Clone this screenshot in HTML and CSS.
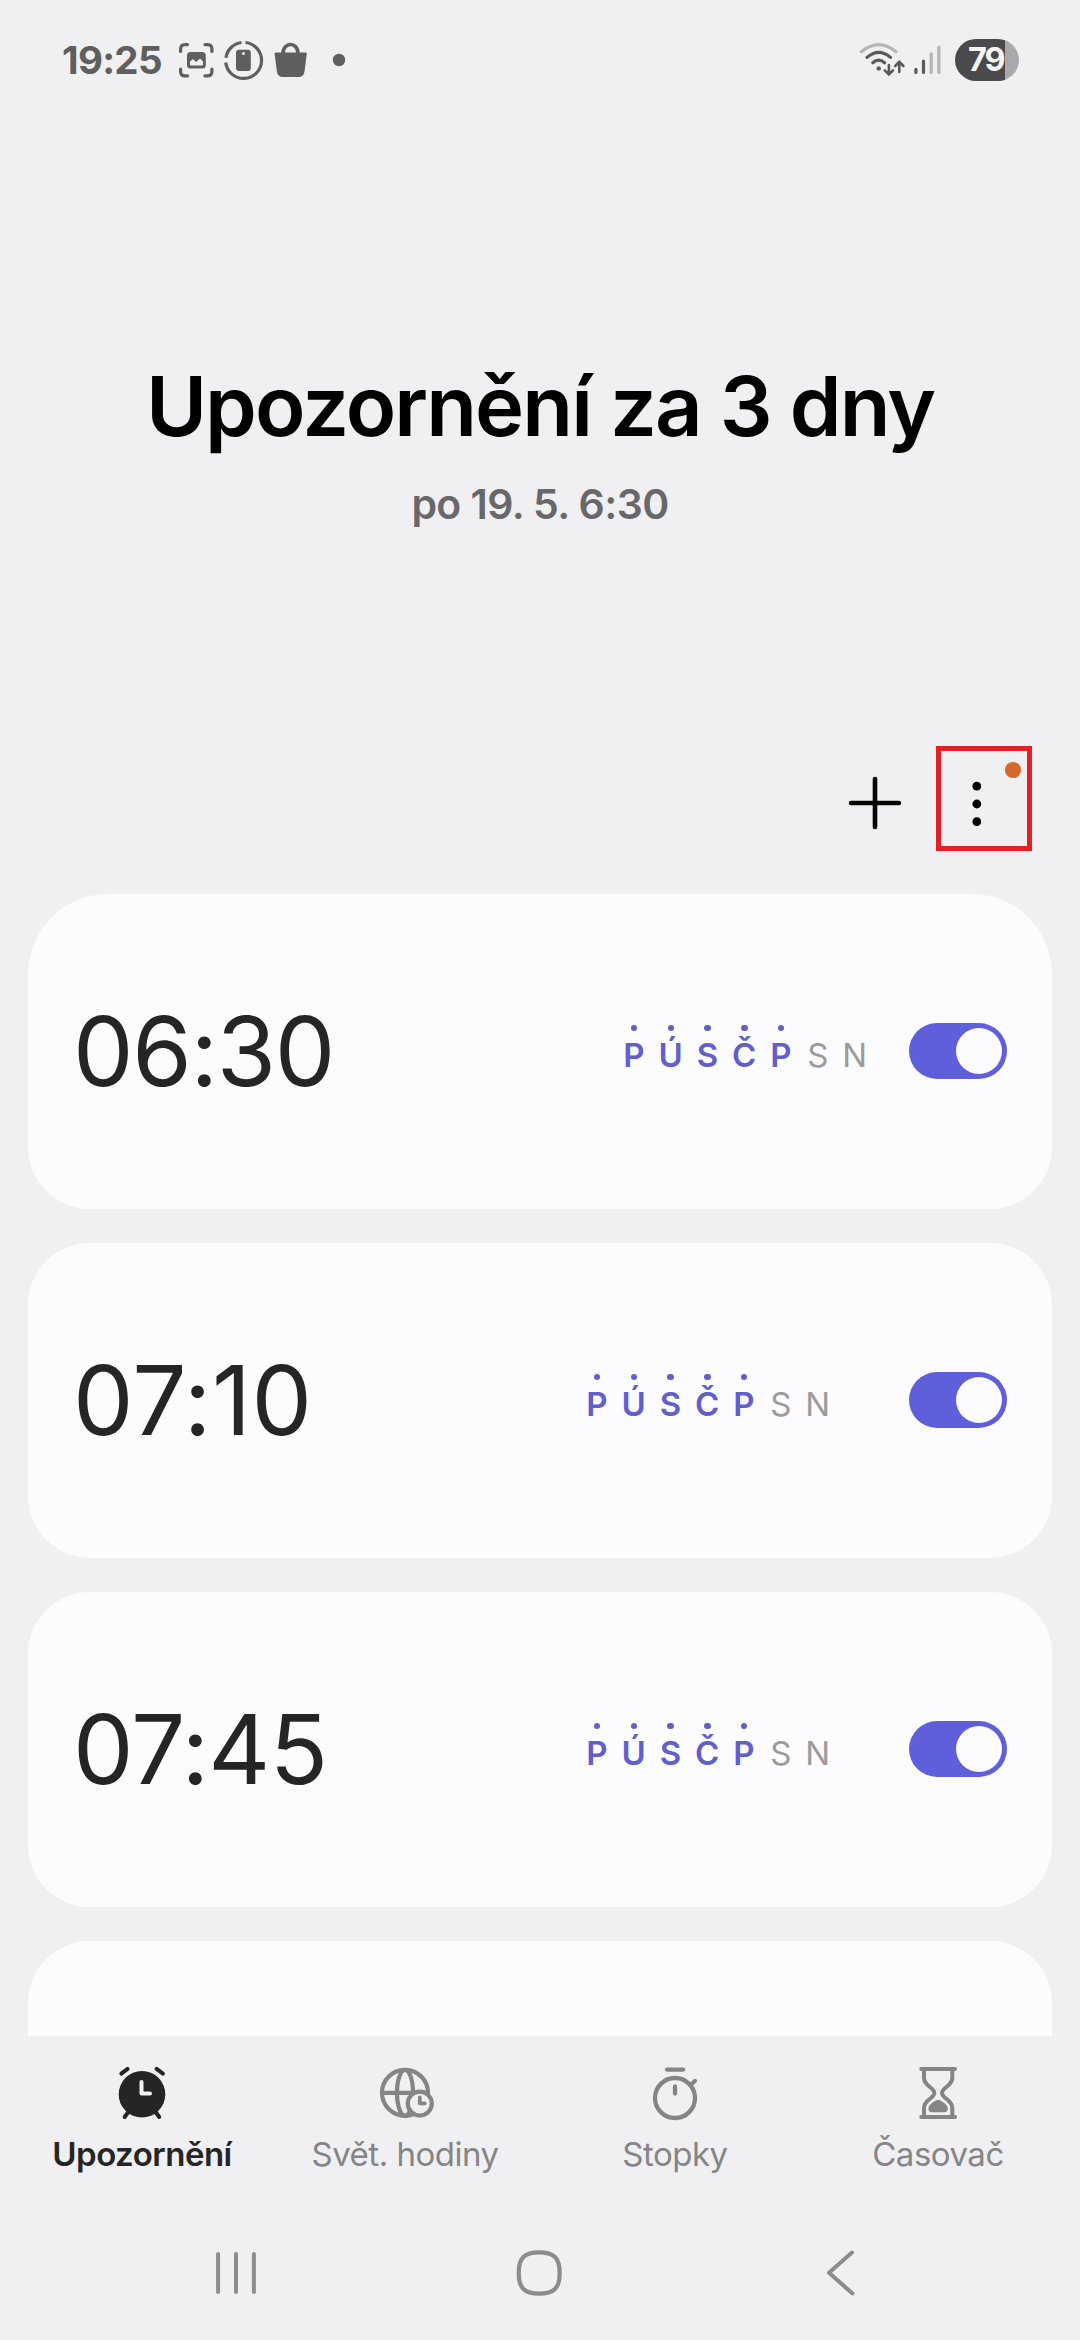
FILE: index.html
```html
<!DOCTYPE html>
<html lang="cs">
<head>
<meta charset="utf-8">
<title>Hodiny</title>
<link rel="stylesheet" href="styles.css">
</head>
<body>
<div class="screen">
  <header class="status">
    <span class="clock">19:25</span>
    <svg class="status-left" width="180" height="50" viewBox="170 35 180 50" fill="none" stroke="#5f5f5f" stroke-width="3.2" stroke-linecap="round">
      <path d="M180.600 51.500V49Q180.600 44.600 185 44.600H187.500M205 44.600H207.500Q211.900 44.600 211.900 49V51.500M211.900 69V71.500Q211.900 75.900 207.500 75.900H205M187.500 75.900H185Q180.600 75.900 180.600 71.500V69"/>
      <rect x="187" y="52" width="18.800" height="16.600" rx="3.500" fill="#5f5f5f" stroke="none"/>
      <path d="M190 64.500V61.500L193 59L196 62L200 58.500L203 61.500V64.500Q203 65.500 202 65.500H191Q190 65.500 190 64.500Z" fill="#f0f0f2" stroke="none"/>
      <path stroke-linecap="butt" d="M245.500 42.500A18 18 0 1 1 225.700 62.500M225.900 57.800A18 18 0 0 1 241.500 42.500"/>
      <rect x="236" y="49.800" width="14.800" height="21.200" rx="3" fill="#5f5f5f" stroke="none"/>
      <circle cx="243.500" cy="53.600" r="1.500" fill="#f0f0f2" stroke="none"/>
      <path d="M283 53.500C283 41.500 298 41.500 298 53.500" stroke-width="3.600"/>
      <path d="M275.500 52.600H306Q307 52.600 306.800 53.800L304.600 71Q303.900 77 298.500 77H283Q277.500 77 276.800 71L274.600 53.800Q274.500 52.600 275.500 52.600Z" fill="#5f5f5f" stroke="none"/>
      <circle cx="339" cy="60" r="6.200" fill="#5f5f5f" stroke="none"/>
    </svg>
    <svg class="status-right" width="90" height="50" viewBox="855 35 90 50" fill="none" stroke="#5a5a5a" stroke-width="3.200" stroke-linecap="round">
      <path stroke="#b5b5b7" d="M861.300 51.800Q878.700 37.600 896 51.800"/>
      <path d="M867 57.400Q878.700 47.200 890.500 57.400M872.800 62.800Q878.700 57.600 884.600 62.800"/>
      <circle cx="878.700" cy="68.400" r="2.200" fill="#5a5a5a" stroke="none"/>
      <path stroke-width="2.600" d="M888.900 65V74.300M884.800 70.400L888.900 74.500L893 70.400M899.300 72V62M895.200 66L899.300 61.800L903.400 66"/>
      <path d="M915.900 69.300V72.400M923.500 61V72.400"/>
      <path stroke="#b5b5b7" d="M931.200 53.800V72.400M938.900 47V72.400"/>
    </svg>
    <span class="battery">79</span>
  </header>

  <section class="hero">
    <h1 class="hero-title">Upozornění za 3 dny</h1>
    <p class="hero-sub">po 19. 5. 6:30</p>
  </section>

  <div class="toolbar">
    <svg width="60" height="60" viewBox="0 0 60 60" stroke="#000" stroke-width="4.600" stroke-linecap="round"><path d="M30 6.100V53.900M6.100 30H53.900"/></svg>
    <div class="more">
      <svg width="86" height="95" viewBox="941 751 86 95"><g fill="#000"><circle cx="976.800" cy="786.200" r="4.400"/><circle cx="976.800" cy="804" r="4.400"/><circle cx="976.800" cy="821.700" r="4.400"/></g><circle cx="1013" cy="770" r="8.100" fill="#d5672f"/></svg>
    </div>
  </div>

  <main class="list">
    <article class="card card-first">
      <time class="time">06:30</time>
      <div class="days"><b>P</b><b>Ú</b><b>S</b><b>Č</b><b>P</b><span>S</span><span>N</span></div>
      <div class="toggle"></div>
    </article>
    <article class="card">
      <time class="time time-loose">07:10</time>
      <div class="days days-wide"><b>P</b><b>Ú</b><b>S</b><b>Č</b><b>P</b><span>S</span><span>N</span></div>
      <div class="toggle"></div>
    </article>
    <article class="card">
      <time class="time time-mid">07:45</time>
      <div class="days days-wide"><b>P</b><b>Ú</b><b>S</b><b>Č</b><b>P</b><span>S</span><span>N</span></div>
      <div class="toggle"></div>
    </article>
    <article class="card"></article>
  </main>

  <nav class="tabs">
    <div class="tab active">
      <svg width="60" height="60" viewBox="112 2063 60 60" fill="none" stroke="#252527" stroke-width="4" stroke-linecap="round">
        <circle cx="142" cy="2094.300" r="23.300" fill="#252527" stroke="none"/>
        <path d="M121.300 2073.600L127.600 2068.900M156.600 2068.900L162.900 2073.600M124.700 2117L129 2111M159.200 2117L155 2111"/>
        <path stroke="#f0f0f2" stroke-linejoin="round" d="M141.500 2082V2093.400H150"/>
      </svg>
      <span>Upozornění</span>
    </div>
    <div class="tab">
      <svg width="60" height="60" viewBox="375 2063 60 60" fill="none" stroke="#858587" stroke-width="4.200" stroke-linecap="round">
        <circle cx="405" cy="2092.800" r="23"/>
        <ellipse cx="405" cy="2092.800" rx="8" ry="23"/>
        <path d="M382 2092.800H428"/>
        <circle cx="419.800" cy="2103.600" r="12" fill="#f0f0f2"/>
        <path d="M419.800 2097.500V2103.300H424.800" stroke-linejoin="round" stroke-width="3.800"/>
      </svg>
      <span>Svět. hodiny</span>
    </div>
    <div class="tab">
      <svg width="60" height="60" viewBox="645 2063 60 60" fill="none" stroke="#858587" stroke-width="4.300" stroke-linecap="round">
        <circle cx="675" cy="2098" r="20"/>
        <path d="M667 2069.600H683.200M695 2081L691 2084.500M675 2086.500V2093.500"/>
      </svg>
      <span>Stopky</span>
    </div>
    <div class="tab">
      <svg width="60" height="60" viewBox="908 2063 60 60" fill="none" stroke="#858587" stroke-width="4" stroke-linecap="round">
        <path d="M921.200 2069H955M921.200 2117H955"/>
        <path d="M924 2070V2078C924 2086 934.300 2087.500 934.300 2093C934.300 2098.500 924 2099.500 924 2108V2116M952.300 2070V2078C952.300 2086 942 2087.500 942 2093C942 2098.500 952.300 2099.500 952.300 2108V2116"/>
        <path d="M938.100 2099.800Q940 2099.800 943.500 2102.500Q947.800 2105.300 947.800 2108.500Q947.800 2112.200 944.500 2112.200H931.800Q928.400 2112.200 928.400 2108.500Q928.400 2105.300 932.700 2102.500Q936.200 2099.800 938.100 2099.800Z" fill="#858587" stroke="none"/>
      </svg>
      <span>Časovač</span>
    </div>
  </nav>

  <footer class="sysnav">
    <svg width="60" height="60" viewBox="206 2243 60 60" stroke="#8c8c8e" stroke-width="4" stroke-linecap="round"><path d="M218.100 2254V2292M236 2254V2292M253.900 2254V2292"/></svg>
    <svg width="60" height="60" viewBox="508 2243 60 60" fill="none" stroke="#8c8c8e" stroke-width="4.200"><path d="M538.200 2252.300C553 2252.300 558.700 2258 558.700 2273C558.700 2288 553 2293.700 538.200 2293.700C523.400 2293.700 517.700 2288 517.700 2273C517.700 2258 523.400 2252.300 538.200 2252.300Z"/></svg>
    <svg width="60" height="60" viewBox="811 2243 60 60" fill="none" stroke="#8c8c8e" stroke-width="4" stroke-linecap="round" stroke-linejoin="round"><path d="M852 2252.500L829 2272.700L852.500 2293.500"/></svg>
  </footer>
</div>
</body>
</html>
```
FILE: styles.css
```css
* { box-sizing: border-box; margin: 0; padding: 0; }
body { background: #f0f0f2; font-family: Inter, "Liberation Sans", sans-serif; }
svg { display: block; flex: none; }
.screen { width: 1080px; height: 2340px; display: flex; flex-direction: column; overflow: hidden; }

.status { height: 120px; flex: none; display: flex; align-items: center; padding: 0 61px 0 62px; }
.clock { width: 108px; font-size: 38.5px; font-weight: 700; letter-spacing: -0.7px; color: #5f5f5f; white-space: nowrap; }
.status-right { margin-left: auto; }
.battery { width: 64px; height: 42px; margin-left: 10px; border-radius: 21px; padding-left: 13px; background: linear-gradient(90deg, #4a4a4c 50px, #a9a9ab 50px); color: #f5f5f5; font-size: 32.5px; font-weight: 700; line-height: 41px; letter-spacing: -2px; }

.hero { height: 604px; flex: none; text-align: center; padding-top: 235px; }
.hero-title { font-size: 83px; line-height: 102px; font-weight: 600; letter-spacing: -1.9px; color: #000; }
.hero-sub { margin-top: 17px; font-size: 41px; line-height: 60px; font-weight: 600; letter-spacing: -0.6px; color: #68686b; }

.toolbar { height: 170px; flex: none; display: flex; justify-content: flex-end; align-items: flex-start; gap: 31px; padding: 22px 48px 0 0; }
.toolbar > svg { margin-top: 27px; }
.more { width: 96px; height: 105px; border: 5px solid #e81e25; }

.list { height: 1142px; flex: none; overflow: hidden; display: flex; flex-direction: column; gap: 34px; padding: 0 28px; }
.card { height: 315px; flex: none; display: flex; align-items: center; padding: 0 45px 1px; border-radius: 62px; background: #fcfcfe; }
.card-first { border-top-left-radius: 80px; border-top-right-radius: 80px; }
.time { font-size: 96px; line-height: 120px; font-weight: 370; letter-spacing: -1.3px; color: #252527; }
.time-loose { letter-spacing: 0.5px; }
.time-mid { letter-spacing: -0.7px; }
.days { margin-left: auto; display: grid; grid-template-columns: repeat(7, 36.8px); margin-right: 36px; padding-top: 8px; font-size: 33px; line-height: 40px; text-align: center; color: #9b9b9d; }
.days-wide { margin-right: 73px; }
.days b { position: relative; font-weight: 600; color: #625fcb; }
.days b::before { content: ""; position: absolute; left: 15.3px; top: -10.5px; width: 6.4px; height: 6.4px; border-radius: 50%; background: #625fcb; }
.toggle { width: 98px; height: 56px; border-radius: 28px; padding: 5px; background: #605fdb; display: flex; justify-content: flex-end; }
.toggle::before { content: ""; width: 46px; height: 46px; border-radius: 50%; background: #fcfcfe; }

.tabs { height: 164px; flex: none; display: grid; grid-template-columns: 284px 242px 298px 228px; padding-top: 27px; color: #858587; font-size: 33px; line-height: 40px; letter-spacing: -0.5px; }
.tab { display: flex; flex-direction: column; align-items: center; gap: 11px; white-space: nowrap; }
.active { color: #252527; font-weight: 600; }

.sysnav { height: 140px; flex: none; display: flex; justify-content: space-between; padding: 43px 209px 0 206px; }
```
